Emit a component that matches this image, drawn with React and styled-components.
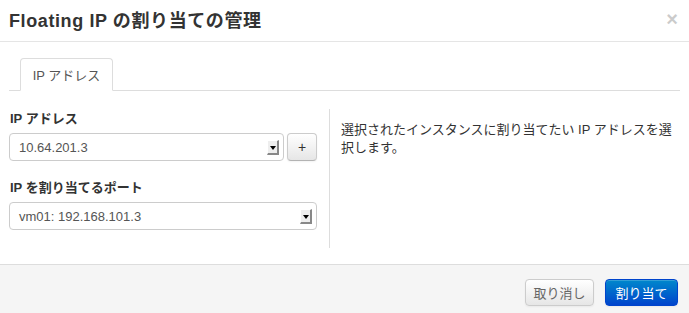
import styled, { createGlobalStyle } from "styled-components";

const GlobalStyle = createGlobalStyle`
  html, body {
    margin: 0;
    padding: 0;
    background: #ffffff;
  }
  body {
    font-family: "Liberation Sans", "Noto Sans CJK JP", sans-serif;
    color: #333333;
    font-size: 13px;
  }
`;

const Modal = styled.div`
  width: 689px;
  height: 313px;
  display: flex;
  flex-direction: column;
  background: #ffffff;
`;

const Header = styled.div`
  height: 41px;
  border-bottom: 1px solid #e5e5e5;
  display: flex;
  align-items: center;
  justify-content: space-between;
  padding: 0 11px 0 9px;
  box-sizing: content-box;
`;

const Title = styled.h3`
  margin: 0;
  font-size: 18px;
  font-weight: bold;
  color: #333333;
  letter-spacing: 0.6px;
  padding-bottom: 4px;
`;

const Close = styled.span`
  font-size: 20px;
  font-weight: bold;
  line-height: 1;
  color: #000000;
  opacity: 0.2;
  padding-bottom: 3px;
`;

const Body = styled.div`
  flex: 1;
  padding: 16px 9px 0 9px;
`;

const TabNav = styled.div`
  display: flex;
  border-bottom: 1px solid #dddddd;
  padding-left: 11px;
  height: 32px;
`;

const Tab = styled.div`
  width: 93px;
  height: 33px;
  box-sizing: border-box;
  border: 1px solid #dddddd;
  border-bottom-color: transparent;
  border-radius: 4px 4px 0 0;
  background: #ffffff;
  color: #555555;
  font-size: 13px;
  display: flex;
  align-items: center;
  justify-content: center;
  padding-bottom: 1px;
`;

const Row = styled.div`
  display: flex;
  padding-top: 18px;
`;

const LeftCol = styled.div`
  width: 309px;
  padding: 3px 11px 0 0;
  border-right: 1px solid #dddddd;
  height: 136px;
`;

const RightCol = styled.div`
  flex: 1;
  padding-left: 11px;
  padding-top: 12px;
  line-height: 18px;
  font-size: 13px;
  color: #333333;
`;

const Field = styled.div`
  margin-bottom: 20px;
`;

const Label = styled.div`
  font-weight: bold;
  font-size: 13px;
  color: #333333;
  margin-bottom: 7px;
  padding-left: 1px;
  line-height: 14px;
`;

const Line = styled.div`
  display: flex;
  gap: 3px;
`;

const Select = styled.div`
  width: ${(p) => p.$width}px;
  height: 28px;
  box-sizing: border-box;
  border: 1px solid #cccccc;
  border-radius: 4px;
  display: flex;
  align-items: center;
  justify-content: space-between;
  padding: 0 4px 0 9px;
  color: #555555;
  font-size: 13px;
  background: #ffffff;
`;

const Arrow = styled.span`
  width: 12px;
  height: 15px;
  box-sizing: border-box;
  background: #eeeeee;
  border-right: 2px solid #888888;
  border-bottom: 2px solid #888888;
  border-top: 1px solid #ffffff;
  border-left: 1px solid #ffffff;
  display: flex;
  justify-content: center;
  padding-top: 5px;

  &::after {
    content: "";
    width: 0;
    height: 0;
    border-left: 3px solid transparent;
    border-right: 3px solid transparent;
    border-top: 4px solid #000000;
  }
`;

const PlusButton = styled.button`
  width: 30px;
  height: 28px;
  border: 1px solid #cccccc;
  border-bottom-color: #b3b3b3;
  border-radius: 4px;
  background: linear-gradient(#ffffff, #e6e6e6);
  box-shadow: inset 0 1px 0 rgba(255, 255, 255, 0.2), 0 1px 2px rgba(0, 0, 0, 0.05);
  font-family: "Liberation Sans", sans-serif;
  font-size: 14px;
  color: #333333;
  padding: 0;
  line-height: 1;
`;

const Footer = styled.div`
  height: 49px;
  border-top: 1px solid #dddddd;
  background: #f5f5f5;
  display: flex;
  justify-content: flex-end;
  align-items: flex-start;
  gap: 11px;
  padding: 14px 11px 0 0;
  box-sizing: border-box;
`;

const Button = styled.button`
  height: 27px;
  width: ${(p) => p.$width}px;
  border-radius: 4px;
  font-family: "Liberation Sans", "Noto Sans CJK JP", sans-serif;
  font-size: 13px;
  padding: 0 0 1px 0;
  border: 1px solid ${(p) => (p.$primary ? "#0044cc" : "#cccccc")};
  color: ${(p) => (p.$primary ? "#ffffff" : "#666666")};
  background: ${(p) =>
    p.$primary
      ? "linear-gradient(#0088cc, #0044cc)"
      : "linear-gradient(#ffffff, #e6e6e6)"};
  box-shadow: inset 0 1px 0 rgba(255, 255, 255, 0.2), 0 1px 2px rgba(0, 0, 0, 0.05);
`;

export default function App() {
  return (
    <>
      <GlobalStyle />
      <Modal>
        <Header>
          <Title>Floating IP の割り当ての管理</Title>
          <Close>×</Close>
        </Header>
        <Body>
          <TabNav>
            <Tab>IP アドレス</Tab>
          </TabNav>
          <Row>
            <LeftCol>
              <Field>
                <Label>IP アドレス</Label>
                <Line>
                  <Select $width={275}>
                    <span>10.64.201.3</span>
                    <Arrow />
                  </Select>
                  <PlusButton>+</PlusButton>
                </Line>
              </Field>
              <Field>
                <Label>IP を割り当てるポート</Label>
                <Select $width={308}>
                  <span>vm01: 192.168.101.3</span>
                  <Arrow />
                </Select>
              </Field>
            </LeftCol>
            <RightCol>
              選択されたインスタンスに割り当てたい IP アドレスを選択します。
            </RightCol>
          </Row>
        </Body>
        <Footer>
          <Button $width={69}>取り消し</Button>
          <Button $width={73} $primary>
            割り当て
          </Button>
        </Footer>
      </Modal>
    </>
  );
}
